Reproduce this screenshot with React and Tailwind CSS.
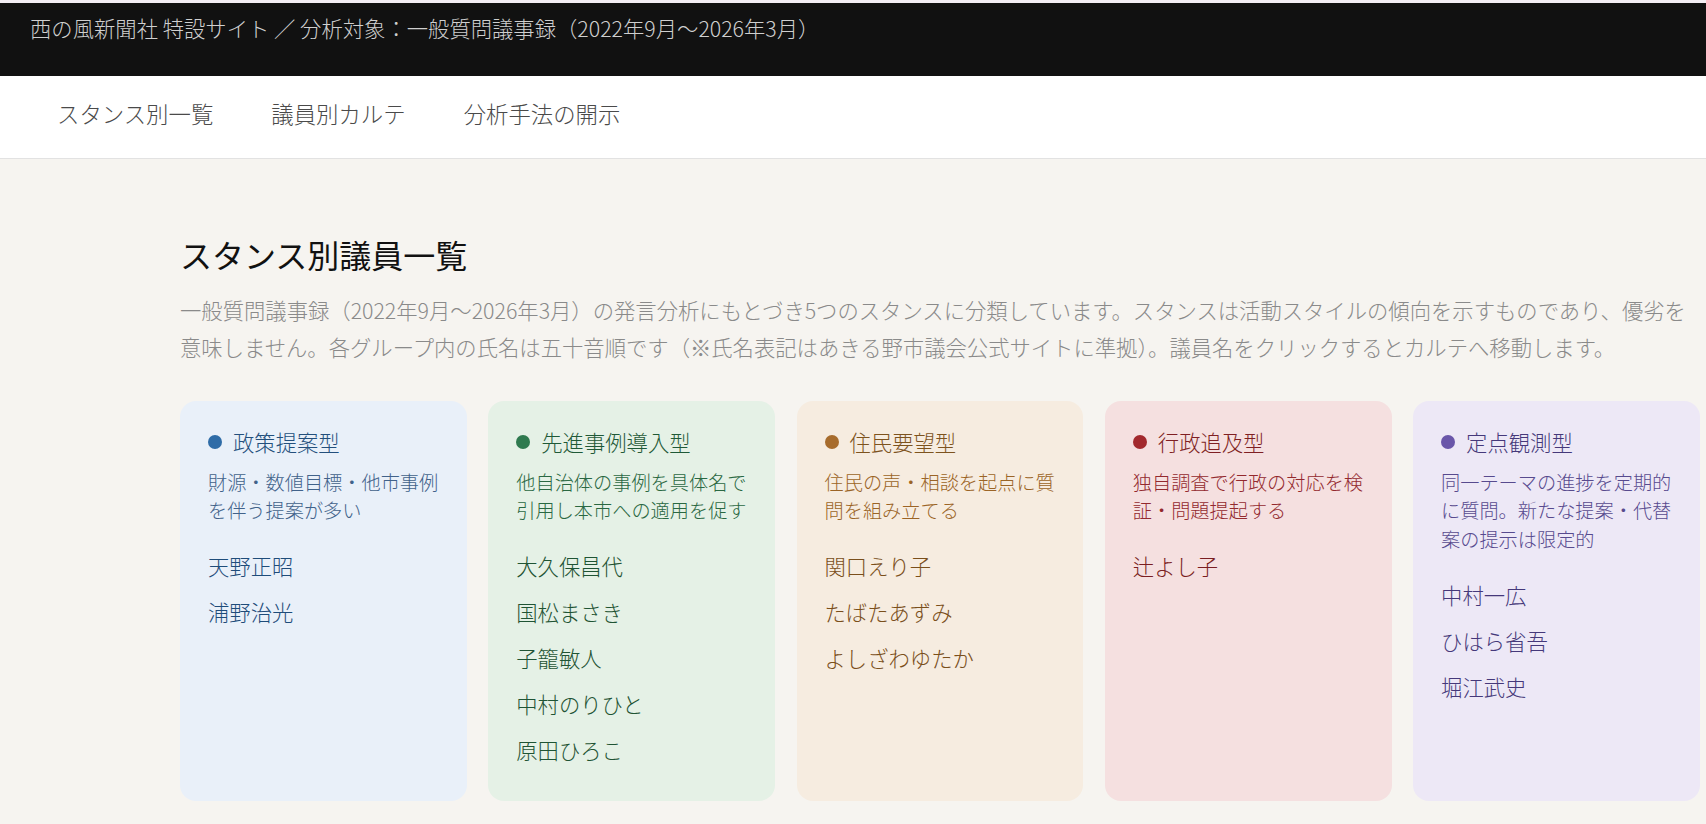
import React from 'react';

const stances = [
    {
        key: 'policy',
        title: '政策提案型',
        desc: '財源・数値目標・他市事例を伴う提案が多い',
        members: ['天野正昭', '浦野治光'],
        card: 'bg-[#e9f0f9]',
        dot: 'bg-[#2f6ca7]',
        titleColor: 'text-[#234f7c]',
        descColor: 'text-[#41628a]',
        nameColor: 'text-[#1e4c7a]',
    },
    {
        key: 'advanced',
        title: '先進事例導入型',
        desc: '他自治体の事例を具体名で引用し本市への適用を促す',
        members: ['大久保昌代', '国松まさき', '子籠敏人', '中村のりひと', '原田ひろこ'],
        card: 'bg-[#e5f1e6]',
        dot: 'bg-[#2f7a4f]',
        titleColor: 'text-[#1f5937]',
        descColor: 'text-[#2a6842]',
        nameColor: 'text-[#1f5434]',
    },
    {
        key: 'resident',
        title: '住民要望型',
        desc: '住民の声・相談を起点に質問を組み立てる',
        members: ['関口えり子', 'たばたあずみ', 'よしざわゆたか'],
        card: 'bg-[#f6ece0]',
        dot: 'bg-[#a76c2d]',
        titleColor: 'text-[#7d531e]',
        descColor: 'text-[#9b6426]',
        nameColor: 'text-[#7a4f1b]',
    },
    {
        key: 'pursuit',
        title: '行政追及型',
        desc: '独自調査で行政の対応を検証・問題提起する',
        members: ['辻よし子'],
        card: 'bg-[#f5e0e0]',
        dot: 'bg-[#a2292e]',
        titleColor: 'text-[#7f1f23]',
        descColor: 'text-[#93292e]',
        nameColor: 'text-[#7a1e22]',
    },
    {
        key: 'fixed',
        title: '定点観測型',
        desc: '同一テーマの進捗を定期的に質問。新たな提案・代替案の提示は限定的',
        members: ['中村一広', 'ひはら省吾', '堀江武史'],
        card: 'bg-[#ede8f6]',
        dot: 'bg-[#6a56a9]',
        titleColor: 'text-[#45387a]',
        descColor: 'text-[#574a8e]',
        nameColor: 'text-[#45387a]',
    },
];

const navItems = ['スタンス別一覧', '議員別カルテ', '分析手法の開示'];

const StanceCard = ({ stance }) => (
    <div className={`rounded-[16px] pl-[28px] pr-[24px] pt-[25px] pb-[28px] ${stance.card}`}>
        {/* Card heading */}
        <div className={`flex items-center gap-[11px] text-[21.33px] leading-[32px] ${stance.titleColor}`}>
            <span className={`w-[14px] h-[14px] rounded-full shrink-0 ${stance.dot}`} />
            <span>{stance.title}</span>
        </div>
        <p className={`mt-[10px] text-[19.2px] leading-[28.8px] ${stance.descColor}`}>{stance.desc}</p>
        <ul className="mt-[18px]">
            {stance.members.map(name => (
                <li key={name} className={`py-[7px] text-[21.33px] leading-[32px] cursor-pointer hover:underline ${stance.nameColor}`}>
                    {name}
                </li>
            ))}
        </ul>
    </div>
);

const App = () => {
    return (
        <div className="min-h-screen bg-[#f6f4f0] font-light font-['Noto_Sans_CJK_JP','Noto_Sans',sans-serif]">
            <div className="h-[3px] bg-[#f3eef4]" />

            {/* Top bar */}
            <header className="h-[73px] bg-[#111111] px-[30px] pt-[9px]">
                <p className="text-[21.33px] leading-[32px] text-[#cfcfcf] whitespace-nowrap">
                    西の風新聞社 特設サイト ／ 分析対象：一般質問議事録（2022年9月～2026年3月）
                </p>
            </header>

            {/* Navigation */}
            <nav className="bg-white border-b border-[#e2e2e2] flex px-[28px]">
                {navItems.map(item => (
                    <a key={item} className="px-[29px] pt-[21px] pb-[28px] text-[22.4px] leading-[33px] text-[#4a4a4a] cursor-pointer whitespace-nowrap">
                        {item}
                    </a>
                ))}
            </nav>

            <main className="ml-[180px] w-[1520px] pt-[71px] pb-[22px]">
                <h1 className="text-[32px] leading-[48px] text-[#111111] font-normal">スタンス別議員一覧</h1>
                <p className="mt-[13px] text-[21.33px] leading-[37.33px] text-[#8a8a8a]">
                    一般質問議事録（2022年9月～2026年3月）の発言分析にもとづき5つのスタンスに分類しています。スタンスは活動スタイルの傾向を示すものであり、優劣を意味しません。各グループ内の氏名は五十音順です（※氏名表記はあきる野市議会公式サイトに準拠）。議員名をクリックするとカルテへ移動します。
                </p>

                <div className="mt-[35px] grid grid-cols-5 gap-[21.33px]">
                    {stances.map(stance => (
                        <StanceCard key={stance.key} stance={stance} />
                    ))}
                </div>
            </main>
        </div>
    );
};

export default App;
